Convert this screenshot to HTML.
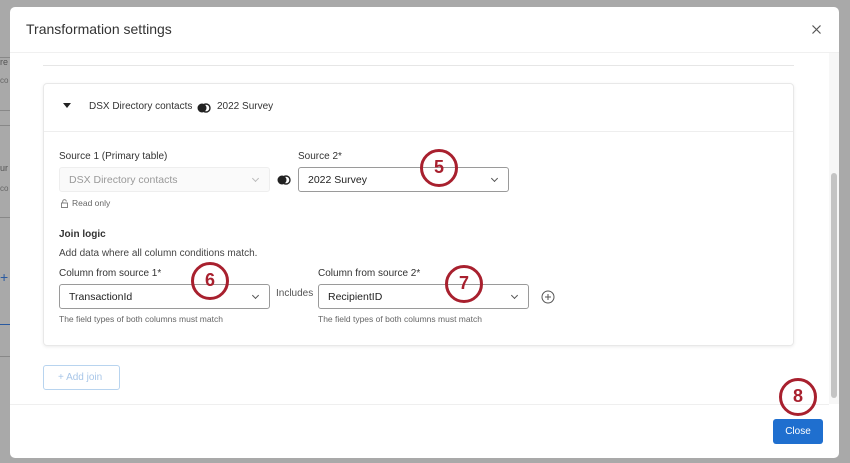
<!DOCTYPE html>
<html><head><style>
*{box-sizing:border-box;margin:0;padding:0}
body{width:850px;height:463px;background:#a9a9a9;font-family:"Liberation Sans",sans-serif;position:relative;overflow:hidden;color:#333}
.a{position:absolute}
.modal{left:10px;top:7px;width:829px;height:451px;background:#fff;border-radius:5px}
.t{font-size:11px;color:#333;white-space:nowrap}
.sel{border:1px solid #9a9a9a;border-radius:3px;background:#fff;height:25px;font-size:10.5px;padding:6px 9px;color:#222}
.chev{position:absolute;right:11px;top:8px;width:5px;height:5px;border-right:1px solid #555;border-bottom:1px solid #555;transform:rotate(45deg)}
.circ{width:38px;height:38px;border:3px solid #a8202e;border-radius:50%;color:#a8202e;font-size:18px;font-weight:bold;text-align:center;line-height:31px;background:transparent}
.help{font-size:8.5px;color:#666}
</style></head><body>
<div class="a" style="left:0;top:57px;width:10px;height:1px;background:#888"></div>
<div class="a t" style="left:0;top:57px;font-size:9px;color:#555">re</div>
<div class="a t" style="left:0;top:76px;font-size:8px;color:#666">co</div>
<div class="a" style="left:0;top:110px;width:10px;height:1px;background:#888"></div>
<div class="a" style="left:0;top:125px;width:10px;height:1px;background:#888"></div>
<div class="a t" style="left:0;top:163px;font-size:9px;color:#555">ur</div>
<div class="a t" style="left:0;top:184px;font-size:8px;color:#666">co</div>
<div class="a" style="left:0;top:217px;width:10px;height:1px;background:#888"></div>
<div class="a t" style="left:0;top:269px;font-size:14px;color:#2a5aa0">+</div>
<div class="a" style="left:0;top:324px;width:10px;height:1px;background:#2a5aa0"></div>
<div class="a" style="left:0;top:356px;width:10px;height:1px;background:#888"></div>

<div class="a modal">
  <div class="a" style="left:16px;top:14px;font-size:14px;color:#333">Transformation settings</div>
  <svg class="a" style="left:802px;top:18px" width="9" height="9" viewBox="0 0 9 9"><path d="M0.5 0.5L8.5 8.5M8.5 0.5L0.5 8.5" stroke="#555" stroke-width="1.2"/></svg>
  <div class="a" style="left:0;top:45px;width:829px;height:1px;background:#f0f0f0"></div>
  <div class="a" style="left:819px;top:46px;width:10px;height:351px;background:#f7f7f7"></div>
  <div class="a" style="left:821px;top:166px;width:6px;height:225px;background:#c4c4c4;border-radius:3px"></div>
  <div class="a" style="left:33px;top:58px;width:751px;height:1px;background:#e6e6e6"></div>
  <div class="a" style="left:33px;top:76px;width:751px;height:263px;border:1px solid #e8e8e8;border-radius:4px;box-shadow:0 1px 3px rgba(0,0,0,.08)">
    <div class="a" style="left:0;top:47px;width:749px;height:1px;background:#eee"></div>
    <div class="a" style="left:19px;top:19px;width:0;height:0;border-left:4px solid transparent;border-right:4px solid transparent;border-top:5px solid #222"></div>
    <div class="a t" style="left:45px;top:17px;font-size:10px">DSX Directory contacts</div>
    <svg class="a" style="left:153px;top:18px" width="14" height="12" viewBox="0 0 14 12"><circle cx="5" cy="6" r="4.5" fill="#222"/><circle cx="9" cy="6" r="4" fill="none" stroke="#222" stroke-width="1.4"/></svg>
    <div class="a t" style="left:173px;top:17px;font-size:10px">2022 Survey</div>

    <div class="a t" style="left:15px;top:67px;font-size:10px">Source 1 (Primary table)</div>
    <div class="a sel" style="left:15px;top:83px;width:211px;border-color:#eee;background:#fafafa;color:#999">DSX Directory contacts<span class="chev" style="border-color:#bbb"></span></div>
    <svg class="a" style="left:233px;top:90px" width="14" height="12" viewBox="0 0 14 12"><circle cx="5" cy="6" r="4.5" fill="#222"/><circle cx="9" cy="6" r="4" fill="none" stroke="#222" stroke-width="1.4"/></svg>
    <svg class="a" style="left:17px;top:115px" width="7" height="9" viewBox="0 0 7 9"><rect x="0.5" y="4" width="6" height="4.5" fill="none" stroke="#777" stroke-width="0.9"/><path d="M1.7 4V2.5a1.8 1.8 0 0 1 3.6 0" fill="none" stroke="#777" stroke-width="0.9"/></svg>
    <div class="a t" style="left:28px;top:114px;font-size:8.5px;color:#666">Read only</div>
    <div class="a t" style="left:254px;top:67px;font-size:10px">Source 2*</div>
    <div class="a sel" style="left:254px;top:83px;width:211px">2022 Survey<span class="chev"></span></div>

    <div class="a t" style="left:15px;top:145px;font-size:10px;font-weight:bold">Join logic</div>
    <div class="a t" style="left:15px;top:164px;font-size:10px;color:#444">Add data where all column conditions match.</div>
    <div class="a t" style="left:15px;top:184px;font-size:10px">Column from source 1*</div>
    <div class="a sel" style="left:15px;top:200px;width:211px">TransactionId<span class="chev"></span></div>
    <div class="a t" style="left:232px;top:204px;font-size:10px;color:#555">Includes</div>
    <div class="a help t" style="left:15px;top:230px">The field types of both columns must match</div>
    <div class="a t" style="left:274px;top:184px;font-size:10px">Column from source 2*</div>
    <div class="a sel" style="left:274px;top:200px;width:211px">RecipientID<span class="chev"></span></div>
    <div class="a help t" style="left:274px;top:230px">The field types of both columns must match</div>
    <svg class="a" style="left:497px;top:206px" width="14" height="14" viewBox="0 0 14 14"><circle cx="7" cy="7" r="6" fill="none" stroke="#555" stroke-width="1"/><path d="M7 4v6M4 7h6" stroke="#555" stroke-width="1"/></svg>
  </div>
  <div class="a" style="left:33px;top:358px;width:77px;height:25px;border:1px solid #b8d4ef;border-radius:3px;font-size:10px;color:#a8c6e8;padding:6px 0 0 14px">+ Add join</div>
  <div class="a" style="left:0;top:397px;width:819px;height:1px;background:#efefef"></div>
  <div class="a" style="left:763px;top:412px;width:50px;height:25px;background:#1f6fcf;border-radius:3px;color:#fff;font-size:10px;text-align:center;line-height:25px">Close</div>
</div>
<div class="a circ" style="left:420px;top:149px">5</div>
<div class="a circ" style="left:191px;top:262px">6</div>
<div class="a circ" style="left:445px;top:265px">7</div>
<div class="a circ" style="left:779px;top:378px">8</div>
</body></html>
